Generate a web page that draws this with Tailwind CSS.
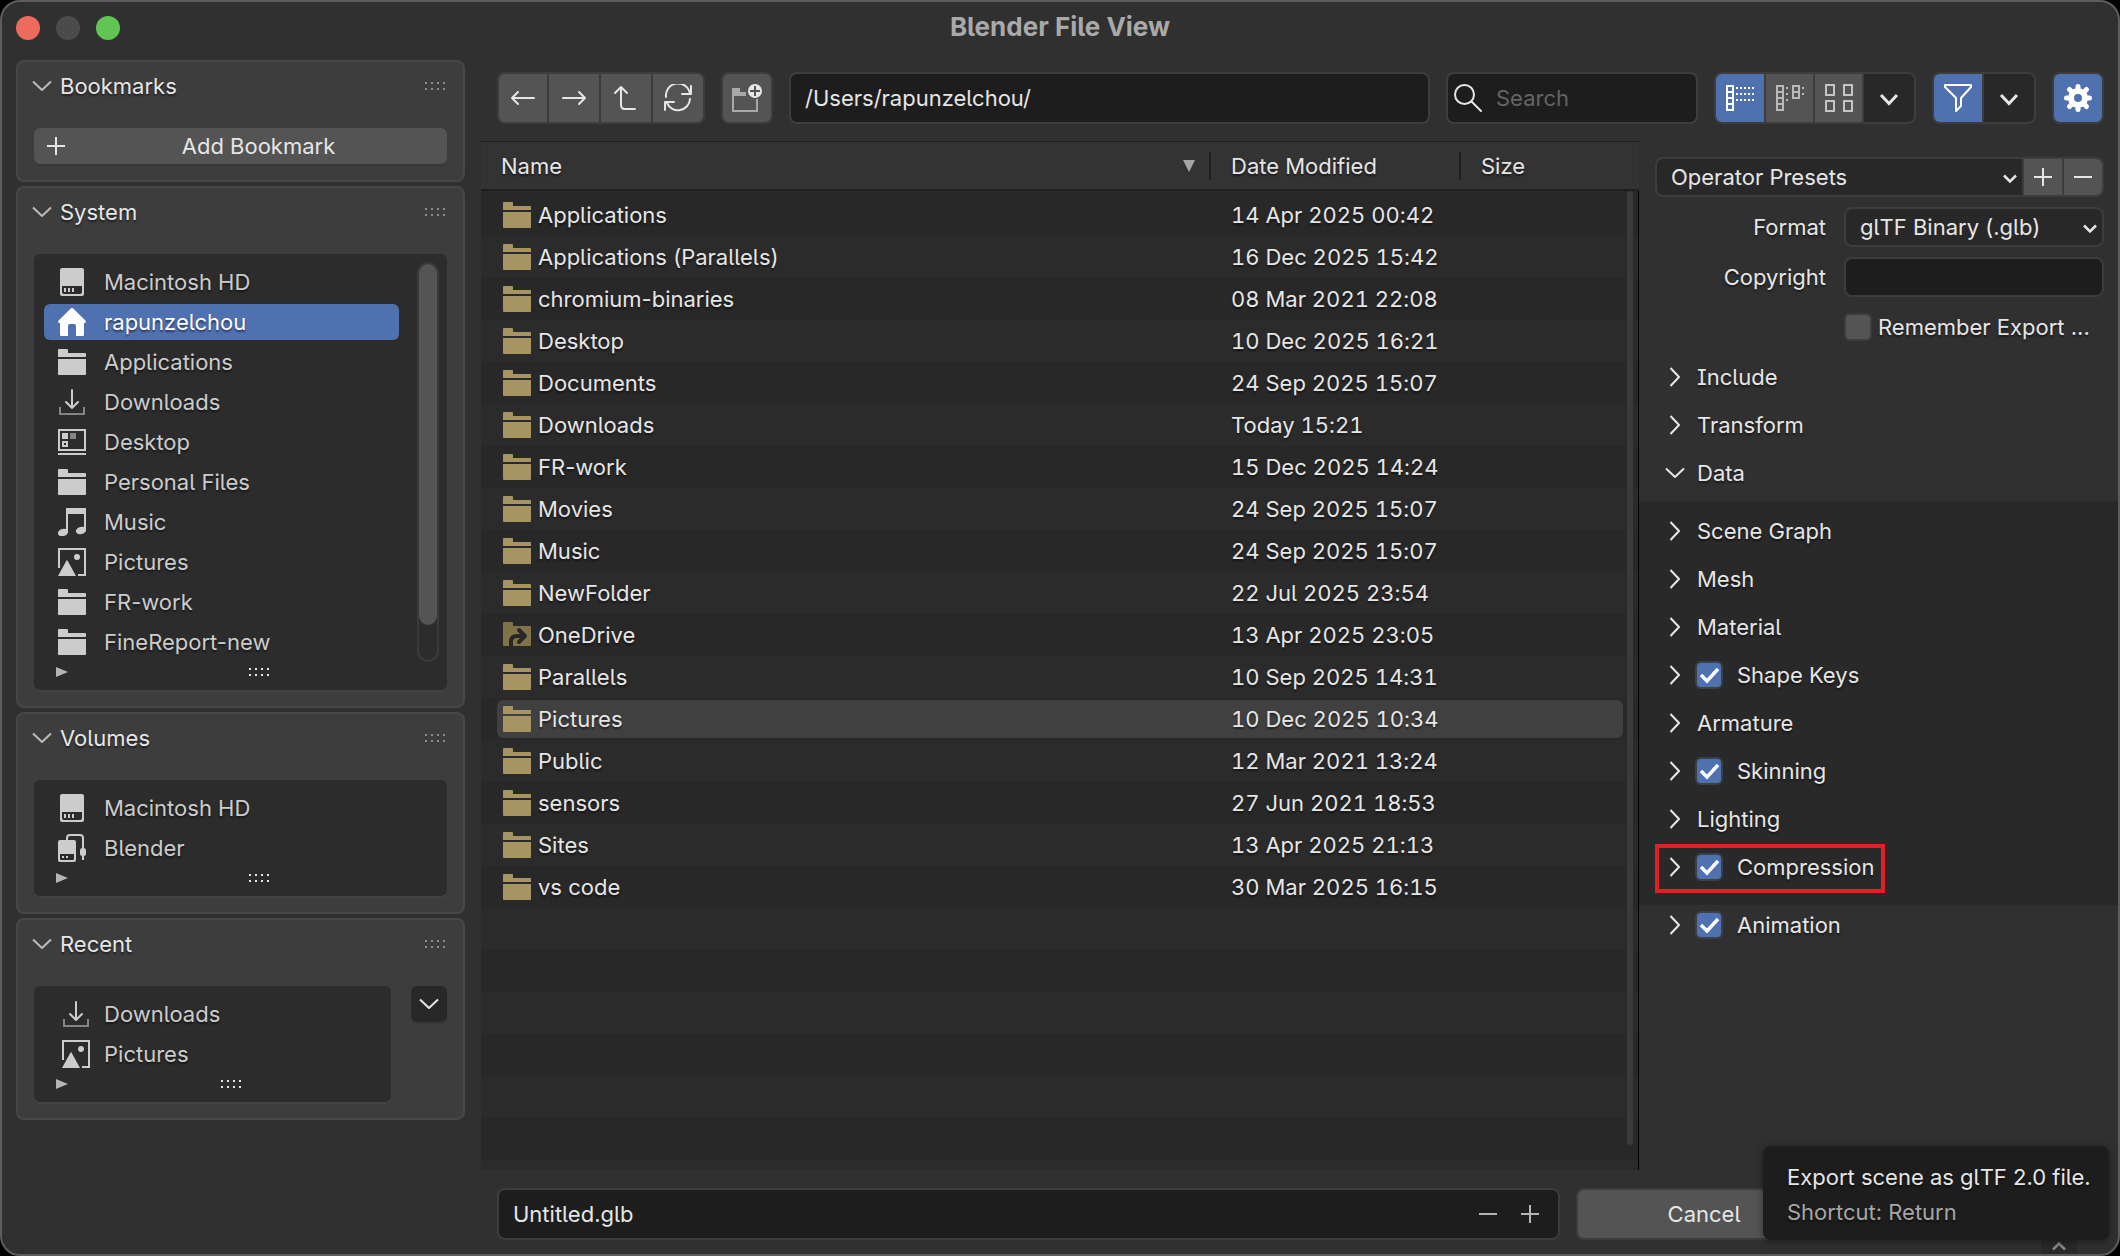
<!DOCTYPE html>
<html lang="en">
<head>
<meta charset="utf-8">
<title>Blender File View</title>
<script src="https://cdn.jsdelivr.net/npm/@tailwindcss/browser@4"></script>
</head>
<body class="bg-black">
<svg class="hidden" aria-hidden="true">
  <symbol id="i-folder" viewBox="0 0 28 26"><path fill="currentColor" d="M0 1Q0 0 1 0H9Q10 0 10 1V4H27Q28 4 28 5V8H0ZM0 10H28V25Q28 26 27 26H1Q0 26 0 25Z"/></symbol>
  <symbol id="i-link" viewBox="0 0 28 26"><path fill="#807249" d="M0 1Q0 0 1 0H9Q10 0 10 1V4H27Q28 4 28 5V23Q28 24 27 24H1Q0 24 0 23Z"/><path fill="none" stroke="#282828" stroke-width="4" d="M8 24V20Q8 14 14 14H20"/><path fill="none" stroke="#282828" stroke-width="4" stroke-linecap="round" stroke-linejoin="round" d="M16 8L22 14L16 20"/></symbol>
  <symbol id="i-disk" viewBox="0 0 28 28"><path fill="currentColor" fill-rule="evenodd" d="M4 0H24Q26 0 26 2V26Q26 28 24 28H4Q2 28 2 26V2Q2 0 4 0ZM4 18V24Q4 26 6 26H22Q24 26 24 24V18Z"/><path fill="currentColor" d="M6 20H8V24H6ZM10 20H12V24H10ZM14 20H16V24H14Z"/></symbol>
  <symbol id="i-ext" viewBox="0 0 28 28"><path fill="currentColor" fill-rule="evenodd" d="M2 6H16Q18 6 18 8V26Q18 28 16 28H2Q0 28 0 26V8Q0 6 2 6ZM2 20V25Q2 26 3 26H15Q16 26 16 25V20Z"/><path fill="currentColor" d="M4 22H6V24H4ZM8 22H10V24H8Z"/><path fill="none" stroke="currentColor" stroke-width="2" d="M9 6V4Q9 1 12 1H22Q25 1 25 4V26"/><rect x="22" y="14" width="6" height="8" rx="2.500" fill="currentColor"/></symbol>
  <symbol id="i-home" viewBox="0 0 28 28"><path fill="currentColor" d="M14 0Q14.700 0 15.300 .6L27.600 12.800Q28.400 14 27 15H26V27Q26 28 25 28H18V18Q18 16 16 16H12Q10 16 10 18V28H3Q2 28 2 27V15H1Q-.4 14 .4 12.800L12.700 .6Q13.300 0 14 0Z"/></symbol>
  <symbol id="i-down" viewBox="0 0 28 28"><path fill="none" stroke="currentColor" stroke-width="2" stroke-linecap="round" stroke-linejoin="round" d="M14 2V20M8 14L14 20L20 14"/><path fill="none" stroke="#858585" stroke-width="2" d="M2 19V26H26V19"/></symbol>
  <symbol id="i-desk" viewBox="0 0 28 28"><path fill="none" stroke="currentColor" stroke-width="2" d="M1 2H27V22H1ZM0 26H28"/><path fill="currentColor" d="M4 5H10V11H4Z"/><path fill="#858585" d="M12 5H18V11H12Z"/><path fill="none" stroke="currentColor" stroke-width="2" d="M5 14H9V18H5Z"/></symbol>
  <symbol id="i-music" viewBox="0 0 28 28"><path fill="currentColor" d="M8 0H28V22H26V6H10V25H8Z"/><ellipse cx="5" cy="24.500" rx="5.200" ry="3.600" transform="rotate(-15 5 24.500)" fill="currentColor"/><ellipse cx="23" cy="22.500" rx="5.200" ry="3.600" transform="rotate(-15 23 22.500)" fill="currentColor"/></symbol>
  <symbol id="i-pic" viewBox="0 0 28 28"><path fill="none" stroke="currentColor" stroke-width="2" d="M1 20V1H27V27H20"/><path fill="currentColor" d="M0 28L8.500 12.500Q9 12 9.500 12.500L18 28Z"/><circle cx="19" cy="9" r="3" fill="currentColor"/></symbol>
  <symbol id="i-dots" viewBox="0 0 20 8"><path fill="currentColor" d="M0 0h2v2h-2zM6 0h2v2h-2zM12 0h2v2h-2zM18 0h2v2h-2zM0 6h2v2h-2zM6 6h2v2h-2zM12 6h2v2h-2zM18 6h2v2h-2z"/></symbol>
  <symbol id="i-tri" viewBox="0 0 12 10"><path fill="currentColor" d="M0 0L12 5L0 10Z"/></symbol>
  <symbol id="i-chev" viewBox="0 0 20 12"><path fill="none" stroke="currentColor" stroke-width="2" stroke-linejoin="round" d="M1 1.500L10 10L19 1.500"/></symbol>
  <symbol id="i-right" viewBox="0 0 12 20"><path fill="none" stroke="currentColor" stroke-width="2" stroke-linejoin="round" d="M1.500 1L10 10L1.500 19"/></symbol>
  <symbol id="i-menu" viewBox="0 0 16 12"><path fill="none" stroke="currentColor" stroke-width="2.500" d="M2 2.500L8 8.500L14 2.500"/></symbol>
  <symbol id="i-plus" viewBox="0 0 20 20"><path fill="none" stroke="currentColor" stroke-width="2" d="M1 10H19M10 1V19"/></symbol>
  <symbol id="i-minus" viewBox="0 0 20 20"><path fill="none" stroke="currentColor" stroke-width="2" d="M1 10H19"/></symbol>
</svg>

<div class="relative flex min-h-screen flex-col overflow-hidden rounded-[20px] border-2 border-[#5c5c5c] bg-[#303030] font-['Inter',sans-serif] text-[22px] leading-7 text-[#e6e6e6] [font-feature-settings:'cv05','cv08','calt'_0] [text-shadow:0_2px_2px_rgb(0_0_0/0.5)]">

  <header class="grid h-[50px] grid-cols-3 items-center px-3.5 pb-px">
    <div class="flex gap-4 pt-0.5">
      <button aria-label="Close" class="size-6 rounded-full bg-[#ec6a5e]"></button>
      <button aria-label="Minimize" class="size-6 rounded-full bg-[#4b4b4b]"></button>
      <button aria-label="Zoom" class="size-6 rounded-full bg-[#61c554]"></button>
    </div>
    <h1 class="text-center text-[26px] font-bold text-[#a9a9a9] [text-shadow:none]">Blender File View</h1>
  </header>

  <div class="flex flex-1 pl-3.5">
    <aside class="flex w-[449px] shrink-0 flex-col gap-1 pt-2">
      <section class="rounded-lg border-2 border-[#474747] bg-[#3d3d3d] px-4 pb-4">
        <h2 class="mb-4 flex h-[50px] items-center gap-2 pb-0.5 text-[#e6e6e6]"><svg class="-ml-0.5 h-3 w-5 text-[#bbb]"><use href="#i-chev"/></svg>Bookmarks<svg class="mr-0.5 ml-auto h-2 w-5 text-[#8c8c8c]"><use href="#i-dots"/></svg></h2>
        <button class="flex h-9 w-full items-center rounded-md bg-[#545454] pl-3 shadow-[0_2px_0_#383838]"><svg class="size-5"><use href="#i-plus"/></svg><span class="flex-1 pl-1 text-center">Add Bookmark</span></button>
      </section>

      <section class="rounded-lg border-2 border-[#474747] bg-[#3d3d3d] px-4 pb-4">
        <h2 class="mb-4 flex h-[50px] items-center gap-2 pb-0.5 text-[#e6e6e6]"><svg class="-ml-0.5 h-3 w-5 text-[#bbb]"><use href="#i-chev"/></svg>System<svg class="mr-0.5 ml-auto h-2 w-5 text-[#8c8c8c]"><use href="#i-dots"/></svg></h2>
        <div class="rounded-md bg-[#2c2c2c] py-2 shadow-[0_2px_0_#424242] text-[#cccccc]">
          <div class="flex pr-2 pl-2.5">
            <ul id="system" class="flex-1"></ul>
            <div class="ml-[18px] w-[22px] rounded-full border-2 border-[#3a3a3a]"><div class="h-[361px] rounded-full bg-[#545454]"></div></div>
          </div>
          <div class="flex h-5 items-center pl-[22px]"><svg class="mr-[3px] h-2.5 w-3 text-[#b5b5b5]"><use href="#i-tri"/></svg><svg class="mx-auto h-2 w-5 text-[#e6e6e6]"><use href="#i-dots"/></svg></div>
        </div>
      </section>

      <section class="rounded-lg border-2 border-[#474747] bg-[#3d3d3d] px-4 pb-4">
        <h2 class="mb-4 flex h-[50px] items-center gap-2 pb-0.5 text-[#e6e6e6]"><svg class="-ml-0.5 h-3 w-5 text-[#bbb]"><use href="#i-chev"/></svg>Volumes<svg class="mr-0.5 ml-auto h-2 w-5 text-[#8c8c8c]"><use href="#i-dots"/></svg></h2>
        <div class="rounded-md bg-[#2c2c2c] py-2 shadow-[0_2px_0_#424242] text-[#cccccc]">
          <ul id="volumes" class="px-2.5"></ul>
          <div class="flex h-5 items-center pl-[22px]"><svg class="mr-[3px] h-2.5 w-3 text-[#b5b5b5]"><use href="#i-tri"/></svg><svg class="mx-auto h-2 w-5 text-[#e6e6e6]"><use href="#i-dots"/></svg></div>
        </div>
      </section>

      <section class="rounded-lg border-2 border-[#474747] bg-[#3d3d3d] px-4 pb-4">
        <h2 class="mb-4 flex h-[50px] items-center gap-2 pb-0.5 text-[#e6e6e6]"><svg class="-ml-0.5 h-3 w-5 text-[#bbb]"><use href="#i-chev"/></svg>Recent<svg class="mr-0.5 ml-auto h-2 w-5 text-[#8c8c8c]"><use href="#i-dots"/></svg></h2>
        <div class="flex items-start gap-5">
          <div class="flex-1 rounded-md bg-[#2c2c2c] py-2 shadow-[0_2px_0_#424242] text-[#cccccc]">
            <ul id="recent" class="px-2.5"></ul>
            <div class="flex h-5 items-center pl-[22px]"><svg class="mr-[3px] h-2.5 w-3 text-[#b5b5b5]"><use href="#i-tri"/></svg><svg class="mx-auto h-2 w-5 text-[#e6e6e6]"><use href="#i-dots"/></svg></div>
          </div>
          <button aria-label="Recent options" class="flex size-9 items-center justify-center rounded-md bg-[#282828] shadow-[0_2px_0_#383838]"><svg class="h-3 w-5"><use href="#i-chev"/></svg></button>
        </div>
      </section>
    </aside>

    <div class="ml-4 flex min-w-0 flex-1 flex-col">
      <div class="flex gap-4 pt-5 pr-3.5 pb-[17px] pl-4">
        <div class="flex h-[52px] w-[208px] gap-0.5 overflow-hidden rounded-lg border-2 border-[#3d3d3d] bg-[#3d3d3d]">
          <button aria-label="Back" class="flex w-12 items-center justify-center bg-[#545454]"><svg class="size-7" viewBox="0 0 28 28" fill="none" stroke="currentColor" stroke-width="2" stroke-linecap="round" stroke-linejoin="round"><path d="M25 14H3M9 8L3 14L9 20"/></svg></button>
          <button aria-label="Forward" class="flex flex-1 items-center justify-center bg-[#545454]"><svg class="size-7" viewBox="0 0 28 28" fill="none" stroke="currentColor" stroke-width="2" stroke-linecap="round" stroke-linejoin="round"><path d="M3 14H25M19 8L25 14L19 20"/></svg></button>
          <button aria-label="Parent directory" class="flex flex-1 items-center justify-center bg-[#545454]"><svg class="size-7" viewBox="0 0 28 28" fill="none" stroke="currentColor" stroke-width="2" stroke-linecap="round" stroke-linejoin="round"><path d="M3 9L9 3L15 9M9 3V21Q9 25 13 25H23"/></svg></button>
          <button aria-label="Refresh" class="flex flex-1 items-center justify-center bg-[#545454]"><svg class="size-7" viewBox="0 0 28 28" fill="none" stroke="currentColor" stroke-width="2" stroke-linecap="round" stroke-linejoin="round"><path d="M2 13A12 12 0 0 1 26 10M27 2V10H18M26 15A12 12 0 0 1 3 19M1 26V18H10"/></svg></button>
        </div>
        <button aria-label="New folder" class="flex size-[52px] items-center justify-center rounded-lg border-2 border-[#3d3d3d] bg-[#545454]"><svg class="h-7 w-8" viewBox="0 0 32 28"><path fill="#a8a8a8" d="M1 4H9V8H15V12H1Z"/><path fill="none" stroke="#a8a8a8" stroke-width="2" d="M2 10V27H26V15"/><circle cx="24" cy="7" r="7" fill="#e6e6e6"/><path stroke="#545454" stroke-width="2" d="M24 2V12M19 7H29"/></svg></button>
        <input aria-label="Directory path" value="/Users/rapunzelchou/" class="h-[52px] min-w-0 flex-1 rounded-lg border-2 border-[#3d3d3d] bg-[#1d1d1d] px-3.5 outline-none">
        <label class="flex h-[52px] w-[252px] items-center gap-3.5 rounded-lg border-2 border-[#3d3d3d] bg-[#1d1d1d] px-1.5">
          <svg class="size-7 shrink-0" viewBox="0 0 28 28" fill="none" stroke="currentColor" stroke-width="2" stroke-linecap="round"><circle cx="10.500" cy="10.500" r="9.500"/><path d="M17.500 17.500L27 27"/></svg>
          <input type="search" aria-label="Search" placeholder="Search" class="w-full min-w-0 bg-transparent outline-none placeholder:text-[#646464]">
        </label>
        <div class="flex h-[52px] w-[202px] gap-0.5 overflow-hidden rounded-lg border-2 border-[#3d3d3d] bg-[#3d3d3d]">
          <button aria-label="Vertical list" class="flex w-12 items-center justify-center bg-[#4f71b0] text-white"><svg class="size-7" viewBox="0 0 28 28" fill="none" stroke="currentColor" stroke-width="2"><path d="M1 2H7V26H1ZM1 8H7M1 14H7M1 20H7"/><path stroke-dasharray="2 2" d="M10 4H28M10 10H28M10 16H28"/></svg></button>
          <button aria-label="Horizontal list" class="flex flex-1 items-center justify-center bg-[#545454] text-[#b9b9b9]"><svg class="size-7" viewBox="0 0 28 28" fill="none" stroke="currentColor" stroke-width="2"><path d="M1 2H7V26H1ZM1 8H7M1 14H7M1 20H7M17 2H23V14H17ZM17 8H23"/><path d="M10 4H12M10 10H12M10 16H12M26 4H28M26 10H28"/></svg></button>
          <button aria-label="Thumbnails" class="flex flex-1 items-center justify-center bg-[#545454] text-[#c4c4c4]"><svg class="size-7" viewBox="0 0 28 28" fill="none" stroke="currentColor" stroke-width="2"><path d="M1 1H9V11H1ZM19 1H27V11H19ZM1 17H9V27H1ZM19 17H27V27H19Z"/></svg></button>
          <button aria-label="Display settings" class="flex w-[50px] items-center justify-center bg-[#282828] pt-1"><svg class="h-4 w-5" viewBox="0 0 20 16"><path fill="none" stroke="currentColor" stroke-width="3" d="M2 3L10 11.500L18 3"/></svg></button>
        </div>
        <div class="flex h-[52px] w-[104px] gap-0.5 overflow-hidden rounded-lg border-2 border-[#3d3d3d] bg-[#3d3d3d]">
          <button aria-label="Filter" class="flex w-12 items-center justify-center bg-[#4f71b0] text-white"><svg class="size-7" viewBox="0 0 28 28" fill="none" stroke="currentColor" stroke-width="2" stroke-linejoin="round"><path d="M1 1H27V3L17 14V22L12 27V14L1 3Z"/></svg></button>
          <button aria-label="Filter settings" class="flex flex-1 items-center justify-center bg-[#282828] pt-1"><svg class="h-4 w-5" viewBox="0 0 20 16"><path fill="none" stroke="currentColor" stroke-width="3" d="M2 3L10 11.500L18 3"/></svg></button>
        </div>
        <button aria-label="Toggle options" class="flex size-[52px] items-center justify-center rounded-lg border-2 border-[#3d3d3d] bg-[#4f71b0] text-white"><svg class="size-7" viewBox="-14 -14 28 28"><path stroke="currentColor" stroke-width="5" stroke-linecap="round" d="M0 -11.500V-8M0 11.500V8M-11.500 0H-8M11.500 0H8M-8.500 -8.500L-6 -6M8.500 8.500L6 6M-8.500 8.500L-6 6M8.500 -8.500L6 -6"/><circle r="7" fill="none" stroke="currentColor" stroke-width="6"/></svg></button>
      </div>

      <div class="flex flex-1">
        <main class="relative min-w-0 flex-1 bg-[#2b2b2b]">
          <table class="w-full table-fixed border-separate border-spacing-0 text-left">
            <colgroup><col><col class="w-[250px]"><col class="w-[178px]"></colgroup>
            <thead class="bg-[#333333]">
              <tr class="h-[50px]">
                <th class="border-t border-b-2 border-[#1f1f1f] p-0 font-normal"><div class="flex h-7 items-center justify-between border-r-2 border-[#1f1f1f] pr-3.5 pl-5">Name<svg class="size-3" viewBox="0 0 12 12"><path fill="#a6a6a6" d="M0 0H12L6 12Z"/></svg></div></th>
                <th class="border-t border-b-2 border-[#1f1f1f] p-0 font-normal"><div class="h-7 border-r-2 border-[#1f1f1f] pl-5">Date Modified</div></th>
                <th class="border-t border-b-2 border-[#1f1f1f] p-0 pl-5 font-normal">Size</th>
              </tr>
            </thead>
            <tbody class="h-[3px] bg-[#282828]"><tr class="h-[3px]"><td colspan="3" class="p-0"></td></tr></tbody>
            <tbody id="files"></tbody>
          </table>
          <div class="pointer-events-none absolute top-[50px] right-0 bottom-0 w-3 border-r border-black pb-[25px]"><div class="h-full w-1.5 rounded-full bg-[#3a3a3a]"></div></div>
        </main>

        <aside class="w-[479px] shrink-0">
          <div class="flex flex-col gap-2.5 pt-4 pr-3.5 pb-5 pl-4">
            <div class="flex h-10 gap-0.5 overflow-hidden rounded-lg border-2 border-[#3d3d3d] bg-[#3d3d3d]">
              <label class="relative flex-1 bg-[#282828]"><select aria-label="Operator Presets" class="h-full w-full appearance-none pl-3.5 outline-none"><option>Operator Presets</option></select><svg class="pointer-events-none absolute top-3.5 right-1 h-3 w-4"><use href="#i-menu"/></svg></label>
              <button aria-label="Add preset" class="flex w-[38px] items-center justify-center bg-[#545454]"><svg class="size-5"><use href="#i-plus"/></svg></button>
              <button aria-label="Remove preset" class="flex w-[38px] items-center justify-center bg-[#545454]"><svg class="size-5"><use href="#i-minus"/></svg></button>
            </div>
            <div class="flex h-10 items-center">
              <label for="format" class="flex-1 pr-[18px] text-right">Format</label>
              <div class="relative h-full w-[260px] rounded-lg border-2 border-[#3d3d3d] bg-[#282828]"><select id="format" class="h-full w-full appearance-none pl-3.5 outline-none"><option>glTF Binary (.glb)</option></select><svg class="pointer-events-none absolute top-3.5 right-1 h-3 w-4"><use href="#i-menu"/></svg></div>
            </div>
            <div class="flex h-10 items-center">
              <label for="copyright" class="flex-1 pr-[18px] text-right">Copyright</label>
              <input id="copyright" class="h-full w-[260px] rounded-lg border-2 border-[#3d3d3d] bg-[#1d1d1d] px-3.5 outline-none">
            </div>
            <label class="ml-auto flex h-10 w-[260px] items-center gap-1.5 whitespace-nowrap"><input type="checkbox" class="size-7 shrink-0 appearance-none rounded-md border-2 border-[#3d3d3d] bg-[#545454]">Remember Export ...</label>
          </div>
          <div id="top-panels" class="-mt-2.5 flex flex-col gap-2 pb-2 pl-[26px]"></div>
          <div id="data-panels" class="flex flex-col gap-2 bg-[#292929] pt-2.5 pb-[18px] pl-[26px]"></div>
          <div id="end-panels" class="flex flex-col pl-[26px]"></div>
        </aside>
      </div>

      <footer class="grid grid-cols-[1fr_256px_256px] gap-4 pt-[18px] pr-3.5 pb-3.5 pl-4">
        <div class="flex h-[52px] items-center rounded-lg border-2 border-[#3d3d3d] bg-[#1d1d1d] pr-[18px] text-[#b5b5b5]">
          <input aria-label="File name" value="Untitled.glb" class="min-w-0 flex-1 bg-transparent px-3.5 text-[#e6e6e6] outline-none">
          <button aria-label="Decrement" class="mr-[22px]"><svg class="size-5"><use href="#i-minus"/></svg></button>
          <button aria-label="Increment"><svg class="size-5"><use href="#i-plus"/></svg></button>
        </div>
        <button class="h-[52px] rounded-lg border-2 border-[#3d3d3d] bg-[#545454]">Cancel</button>
      </footer>
    </div>
  </div>

  <button aria-label="Expand region" class="absolute right-[41px] bottom-0 flex h-4 w-9 items-center justify-center bg-[#2a2a2a] text-[#8a8a8a]"><svg class="h-3 w-4 rotate-180"><use href="#i-menu"/></svg></button>
  <div role="tooltip" class="absolute right-[9px] bottom-3.5 w-[346px] rounded-lg bg-[#1d1d1d] pt-3.5 pb-2.5 pl-6 leading-[35px] whitespace-nowrap shadow-[0_2px_8px_rgb(0_0_0/0.4)]">
    <p>Export scene as glTF 2.0 file.</p>
    <p class="text-[#a6a6a6]">Shortcut: Return</p>
  </div>
</div>

<script>
  const place = (icon, name, selected, inset) => `
    <li class="flex h-10 items-center"><a href="#" class="flex h-9 w-full items-center rounded-md ${selected ? 'bg-[#4f71b0] text-white' : ''} ${inset ? 'gap-3.5 pl-[18px]' : 'gap-[18px] pl-3.5'}"><svg class="size-7 shrink-0"><use href="#i-${icon}"/></svg>${name}</a></li>`;
  const fill = (id, html) => document.getElementById(id).innerHTML = html;

  fill('system', [['disk','Macintosh HD'],['home','rapunzelchou'],['folder','Applications'],['down','Downloads'],['desk','Desktop'],['folder','Personal Files'],['music','Music'],['pic','Pictures'],['folder','FR-work'],['folder','FineReport-new']]
    .map(([i, n]) => place(i, n, n === 'rapunzelchou', false)).join(''));
  fill('volumes', place('disk', 'Macintosh HD') + place('ext', 'Blender'));
  fill('recent', place('down', 'Downloads', false, true) + place('pic', 'Pictures', false, true));

  const files = [['Applications','14 Apr 2025 00:42'],['Applications (Parallels)','16 Dec 2025 15:42'],['chromium-binaries','08 Mar 2021 22:08'],['Desktop','10 Dec 2025 16:21'],['Documents','24 Sep 2025 15:07'],['Downloads','Today 15:21'],['FR-work','15 Dec 2025 14:24'],['Movies','24 Sep 2025 15:07'],['Music','24 Sep 2025 15:07'],['NewFolder','22 Jul 2025 23:54'],['OneDrive','13 Apr 2025 23:05'],['Parallels','10 Sep 2025 14:31'],['Pictures','10 Dec 2025 10:34'],['Public','12 Mar 2021 13:24'],['sensors','27 Jun 2021 18:53'],['Sites','13 Apr 2025 21:13'],['vs code','30 Mar 2025 16:15']];
  const fileRow = ([name, date]) => {
    const hot = name === 'Pictures' ? 'bg-[#404040]' : '';
    return `<tr class="h-[42px] odd:bg-[#282828]">
      <td class="p-0 pl-4"><div class="flex h-[38px] items-center gap-[7px] rounded-l-md pl-1.5 ${hot}"><svg class="h-[26px] w-7 shrink-0 text-[#a69462]"><use href="#${name === 'OneDrive' ? 'i-link' : 'i-folder'}"/></svg>${name}</div></td>
      <td class="p-0"><div class="flex h-[38px] items-center pl-5 [font-feature-settings:'cv05','tnum','calt'_0] ${hot}">${date}</div></td>
      <td class="p-0 pr-4"><div class="h-[38px] rounded-r-md ${hot}"></div></td></tr>`;
  };
  const blank = '<tr class="h-[42px] odd:bg-[#282828]"><td colspan="3" class="p-0"></td></tr>';
  fill('files', files.map(fileRow).join('') + blank.repeat(6));

  const panel = (name, kind) => {
    const arrow = kind === 'open'
      ? '<button aria-label="Collapse" class="flex w-5 justify-center"><svg class="h-3 w-5"><use href="#i-chev"/></svg></button>'
      : '<button aria-label="Expand" class="flex w-5 justify-center"><svg class="h-5 w-3"><use href="#i-right"/></svg></button>';
    const tick = '<span class="relative size-7"><input type="checkbox" checked class="block size-7 appearance-none rounded-md border-2 border-[#3a4149] bg-[#4f71b0]"><svg class="pointer-events-none absolute inset-0 size-7" viewBox="0 0 28 28"><path fill="none" stroke="#fff" stroke-width="3.500" d="M6 14L12 20L23 8"/></svg></span>';
    const body = kind === 'check'
      ? `<label class="flex items-center gap-3.5 pl-2.5">${tick}${name}</label>`
      : `<span class="pl-3">${name}</span>`;
    const frame = name === 'Compression'
      ? '<span class="pointer-events-none absolute -inset-x-2.5 -top-[3px] -bottom-1.5 border-4 border-[#e31f26]"></span>' : '';
    return `<div class="relative flex h-10 w-fit items-center">${arrow}${body}${frame}</div>`;
  };
  fill('top-panels', panel('Include') + panel('Transform') + panel('Data', 'open'));
  fill('data-panels', panel('Scene Graph') + panel('Mesh') + panel('Material') + panel('Shape Keys', 'check') + panel('Armature') + panel('Skinning', 'check') + panel('Lighting') + panel('Compression', 'check'));
  fill('end-panels', panel('Animation', 'check'));
</script>
</body>
</html>
